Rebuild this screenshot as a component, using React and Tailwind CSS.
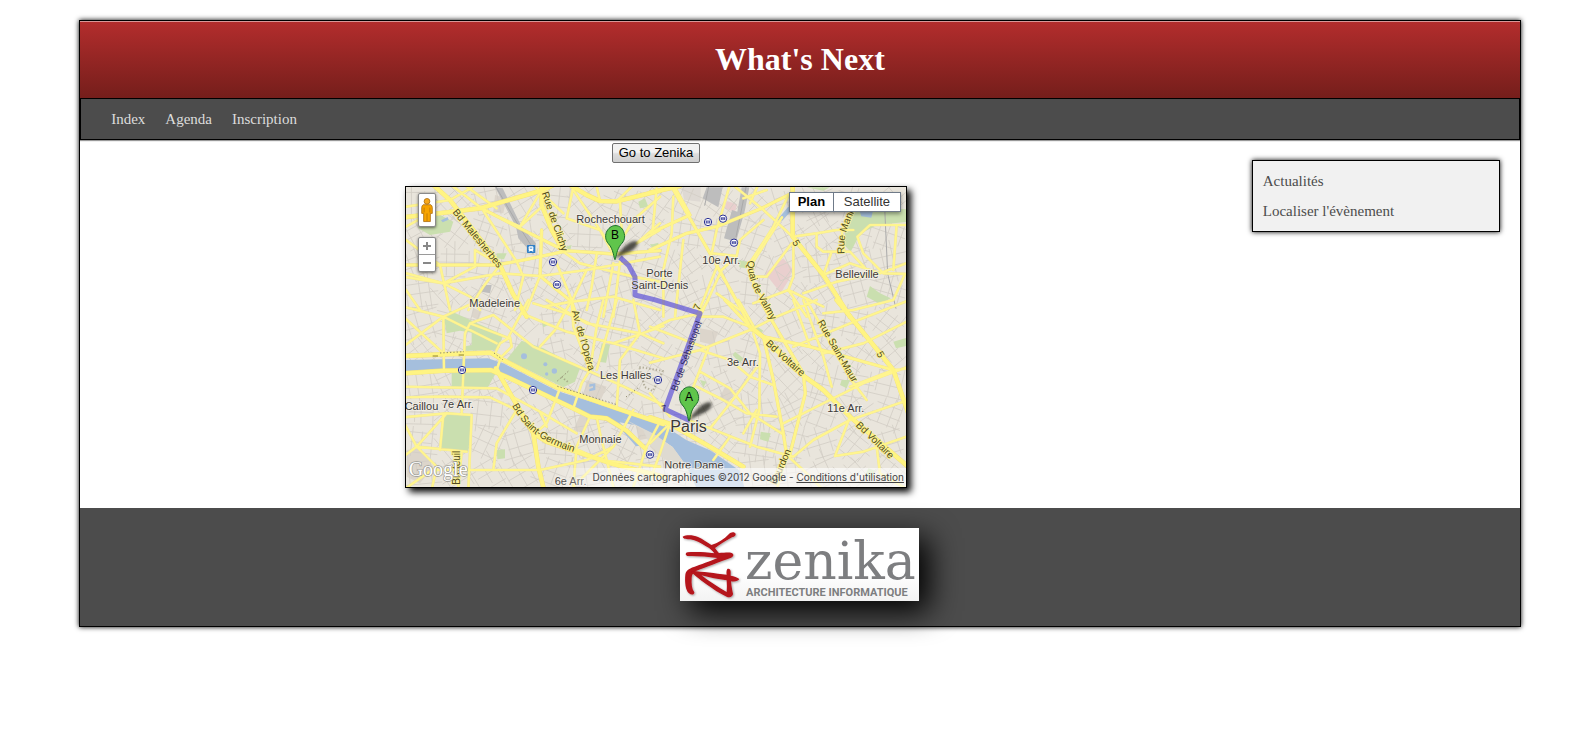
import React from "react";

/* The map is drawn in four sheets on a 1500 x 900 grid. */
const NW = "translate(-18 -171)";
const NE = "translate(732 -171)";
const SW = "translate(-18 339)";
const SE = "translate(732 339)";

const boulevards = [
  [NW, "M10 262L150 246L240 235L430 180L470 160M510 165L560 195L600 213L650 214L780 182M100 165L150 210L300 405L338 490L380 560M425 165L425 225L455 300L490 362"],
  [NE, "M0 188L90 168M428 165L428 320L520 435L600 560"],
  [SW, "M10 168L130 163L272 158L310 180L470 262L650 325L790 372M10 220L130 212L272 210L330 235L520 325L570 350L620 355L680 392L735 445M288 205L330 280L400 400L440 425L520 452L640 492L790 530M400 400L415 500L432 570"],
  [SE, "M0 352L60 372L180 440L280 500M300 80L345 115L450 220L520 270L600 350L780 505M560 0L650 110L730 210L775 340"],
];

const avenues = [
  [NW, "M490 362L560 366L640 372L780 362M10 405L290 405L380 388L490 365M425 300L420 438L515 515L530 560M245 235L350 290L490 360"],
  [NE, "M62 165L180 370L275 540L305 600M0 310L120 255L70 165M0 360L110 310L200 290L335 235L415 195"],
  [SE, "M225 0L300 80M340 110L370 240L400 400L410 465M330 0L385 95L460 220L466 280L420 462M340 110L480 140L730 210"],
];

const streets = [
  [NW, "M160 170L245 235L350 395M200 170L290 235M18 230L150 210L220 170M18 290L90 250L150 246M18 330L120 405L150 540M425 230L360 290L240 235M425 180L360 290M400 165L490 250M520 170L500 265L600 300L640 372M520 180L640 360M780 200L700 270L640 372M780 280L710 340L780 300M225 360L225 410L130 460L18 430M225 360L300 405M130 460L210 500L240 540M300 405L250 470L205 540M10 440L130 460L300 430L420 438L560 420L780 380M350 395L370 440L345 540M420 438L380 540M490 365L540 400L700 440L780 455M640 400L610 560M660 395L640 560M560 420L515 515L430 530M515 515L640 500L780 540M470 400L515 510M18 480L60 540M590 372L575 470L560 540M590 170L600 213M650 214L700 165M660 214L665 300L645 380"],
  [NE, "M20 175L8 300M70 200L65 310L40 420L40 560M255 170L335 235L428 320M238 170L200 300L185 370M322 170L300 220M416 195L370 290L302 395M396 262L310 395M350 180L280 205M428 320L500 310L560 300L610 300M430 340L430 440L415 480L470 560M185 370L260 378L215 420L155 550M300 440L350 440L425 340M340 270L270 330L260 378M500 310L500 350L520 365L600 365L660 430M520 435L545 365M520 435L600 400L690 430L768 400M780 285L660 285L622 320L640 370L700 430L780 432M460 490L560 455L680 430M610 540L730 510L765 432M610 240L575 300L582 360M100 330L75 560M205 400L140 560M302 400L310 460L370 560M200 490L270 540M520 550L610 540M310 520L415 480L520 530M740 285L730 420"],
  [SW, "M10 20L130 50L290 130M10 140L130 50L240 0M130 50L132 212M210 70L195 100L185 340M210 70L280 45L400 140L560 210L650 250L790 315M210 70L320 112M10 50L130 160M325 112L385 0M300 130L330 112L335 140L305 170L285 160L300 130M365 40L450 75L500 95L640 130L790 175M515 0L520 80L570 210L545 250L520 325M465 90L515 0M465 90L420 140M610 0L590 80L570 210M650 0L590 210M720 100L660 180L650 320M640 130L790 78M720 100L700 0M440 0L560 70L720 100M720 100L790 130M300 180L290 210M480 265L440 370L400 405M700 330L640 440L600 480L520 560M780 365L740 440L700 560M10 260L290 265L420 335L530 400M10 292L120 290L270 292L350 330M350 330L290 430L280 510M10 352L140 340L215 345L205 570M10 365L50 440L110 500L95 570M50 440L200 455M50 440L10 470M50 440L140 340M110 510L280 510L420 510L560 480L640 440M130 345L120 450M10 570L110 500M570 350L530 440L520 560M590 350L600 400L640 560M535 450L600 480L780 500M420 335L440 380M185 455L175 560M400 10L500 40L590 80"],
  [SE, "M265 0L310 78M300 90L150 150L0 188M300 90L380 50L500 0M310 100L330 160L328 330L300 440M430 140L620 62L780 0M400 370L560 290L640 250L775 200M460 0L520 170L545 260M470 0L600 235L650 300M412 465L430 470L490 420L600 360L775 300M600 350L555 468M555 468L640 455L775 408M410 465L470 520L520 570M410 465L320 440L180 385L120 362M410 465L380 570M150 50L220 50L300 80M150 40L175 0M150 150L240 180L300 230L370 255M140 260L220 300L290 340L380 350M150 215L240 265L300 340L395 400M180 385L240 310L330 190M0 90L60 60L150 40M0 80L130 130L175 145L130 260L120 362M240 410L190 480M680 440L690 520L775 570M520 160L640 130L780 60M730 210L600 260M430 0L480 140M280 400L320 330M0 280L60 350M0 430L60 370L30 460L0 540M780 205L730 210"],
];

const parks = [
  [NW, "M60 270L120 255L160 275L150 305L90 315L55 295ZM290 370L320 370L312 388L290 385ZM495 350L515 345L510 362ZM715 215L735 205L745 230L720 235ZM750 345L775 338L775 355Z"],
  [NE, "M612 232L780 238L780 275L680 285L630 312L602 365L578 340L590 290ZM265 390L292 395L288 415L268 412ZM650 500L660 468L690 490L722 505L690 522ZM0 342L20 345L10 360ZM470 172L540 172L520 182Z"],
  [SW, "M150 32L310 105L292 150L195 152L190 140L215 135L215 98L180 92L140 100L133 60ZM365 122L430 145L540 205L525 245L490 262L320 178ZM155 218L290 215L262 265L155 262ZM142 335L215 348L205 455L120 448L128 365ZM605 130L630 135L618 188L595 185ZM290 450L315 448L315 475L292 478ZM425 65L445 75L430 82Z"],
  [SE, "M255 155L280 175L270 190L248 165ZM300 65L340 92L325 108L295 82ZM575 240L600 240L590 265L570 255ZM332 395L362 400L355 425L330 418ZM730 125L775 112L768 138L738 145ZM150 240L170 245L160 262ZM655 505L675 512L668 535L645 528Z"],
];

const yards = [
  [NW, "M285 172L308 175L365 290L408 340L400 375L355 325L348 290ZM245 465L275 465L270 490L245 485Z"],
  [NE, "M170 172L218 172L205 232L158 205ZM275 172L298 172L285 240L258 335L222 325L246 240L262 245Z"],
];

const blocks = [
  [NW, "M285 195L320 205L310 250L280 245Z"],
  [SW, "M220 25L245 35L235 60L215 50ZM180 220L212 220L212 255L185 255ZM540 345L570 350L550 400L520 390ZM20 450L60 445L100 500L60 550L20 530ZM125 370L150 365L150 390L125 395ZM700 350L760 370L770 410L720 420ZM560 240L620 260L600 305L550 290ZM290 275L312 280L305 300Z"],
  [SE, "M150 85L205 95L190 135L150 125ZM225 260L260 275L230 310L210 290ZM0 400L40 400L30 470L0 440Z"],
];

const metros = [
  [441, 225], [453, 293], [906, 105], [951, 95], [984, 167],
  [168, 549], [381, 609], [756, 579], [732, 803],
];

/* Fine side streets, one small tilted grid per city block. */
function sideStreets() {
  let seed = 17;
  const rnd = () => {
    seed = (seed * 16807) % 2147483647;
    return seed / 2147483647;
  };
  let d = "";
  for (let y = 0; y < 900; y += 90) {
    for (let x = 0; x < 1500; x += 100) {
      const a = rnd() * 1.5;
      const c = Math.cos(a);
      const s = Math.sin(a);
      for (let k = -1; k < 2; k++) {
        const o = k * 32 + rnd() * 14;
        const l = 30 + rnd() * 35;
        const mx = x + 45;
        const my = y + 45;
        d += `M${mx - c * l - s * o} ${my - s * l + c * o}L${mx + c * l - s * o} ${my + s * l + c * o}`;
        d += `M${mx + s * l + c * o} ${my - c * l + s * o}L${mx - s * l + c * o} ${my + c * l + s * o}`;
      }
    }
  }
  return d;
}
const sideStreetPath = sideStreets();

const places = [
  ["Rochechouart", 511, 108], ["Madeleine", 190, 359], ["Porte", 721, 269], ["Saint-Denis", 676, 305],
  ["10e Arr.", 889, 230], ["Belleville", 1288, 273], ["Les Halles", 582, 575], ["7e Arr.", 108, 663],
  ["Caillou", -4, 668], ["Monnaie", 520, 769], ["3e Arr.", 963, 538], ["11e Arr.", 1264, 676],
  ["Notre Dame", 775, 847], ["6e Arr.", 446, 893],
];

const roadNames = [
  ["Bd Malesherbes", 139, 76, 51], ["Rue de Clichy", 407, 18, 71], ["Av. de l'Opéra", 497, 373, 74],
  ["Bd Voltaire", 1078, 472, 42], ["Rue Saint-Maur", 1234, 406, 60],
  ["Bd Voltaire", 1348, 716, 44], ["Breteuil", 163, 893, -90], ["Bourdon", 1110, 895, -66],
  ["5", 1158, 166, 60], ["5", 1411, 500, 60], ["7", 880, 372, -66],
];

function Layer({ data, ...rest }) {
  return data.map(([t, d], i) => <path key={i} transform={t} d={d} {...rest} />);
}

function Pin({ x, y, letter }) {
  return (
    <g transform={`translate(${x} ${y})`}>
      <path d="M0 0C14 -26 38 -52 60 -54C80 -54 62 -24 30 -16Z" fill="#1d1d12" opacity=".75" filter="url(#soft)" />
      <path d="M0 2C-4 -2 -4 -30 -20 -46C-30 -57 -30 -74 -24 -84C-10 -108 18 -104 26 -82C32 -66 28 -54 18 -44C4 -28 5 -8 0 2Z" fill="#60c54b" stroke="#1b6d2c" strokeWidth="3" />
      <text x="0" y="-59" textAnchor="middle" fontSize="36" fill="#000">{letter}</text>
    </g>
  );
}

function MapDrawing() {
  return (
    <svg viewBox="0 0 1500 900" className="block h-full w-full font-['Liberation_Sans',sans-serif]" role="img" aria-label="Paris">
      <defs>
        <filter id="soft" x="-30%" y="-30%" width="160%" height="160%"><feGaussianBlur stdDeviation="4" /></filter>
        <path id="germain" d="M318 656C360 730 400 762 500 794" />
        <path id="valmy" d="M1024 222C1028 300 1060 330 1120 446" />
        <path id="manin" d="M1316 200C1310 150 1326 110 1362 40" />
      </defs>
      <rect width="1500" height="900" fill="#e9e5dc" />
      <path d="M827 1L884 1L884 44L834 38Z" fill="#ded9d3" />
      <Layer data={blocks} fill="#dcd5cb" />
      <path d="M1077 259L1132 214L1160 246L1148 280L1124 318Z" fill="#e9cfce" />
      <path d="M962 42L994 52L986 76L956 64Z" fill="#e9cfce" />
      <path d={sideStreetPath} stroke="#d3cec5" strokeWidth="2.5" fill="none" />
      <Layer data={parks} fill="#cadfaf" />
      <Layer data={yards} fill="#bdbdbd" />
      <g fill="none" stroke="#a9a9a9" strokeWidth="3">
        <path d="M270 0L340 120L385 190M908 0L896 56M1020 0L990 150M1436 60L1445 260L1470 365" />
      </g>
      <g fill="#a5bfdd">
        <path d="M0 519L246 514L294 530L454 612L632 669L772 714L842 760L912 790L1000 850L1015 900L870 900L842 838L800 780L742 740L690 715L640 706L712 775L690 778L622 701L560 686L500 668L412 624L250 544L120 547L0 552Z" />
        <path d="M1146 60L1166 60L1128 102L1114 98Z" />
        <path d="M1362 75L1400 75L1396 92L1366 88Z" />
        <circle cx="354" cy="508" r="9" /><circle cx="418" cy="532" r="6" /><circle cx="445" cy="552" r="8" /><circle cx="422" cy="561" r="5" />
        <path d="M550 592L568 589L568 609L550 613L550 606L561 602L561 597L550 600Z" />
        <path d="M105 100L125 90L128 98L110 106Z" />
      </g>
      <path d="M650 694L742 740L800 780L842 838L800 842L732 774L712 730Z" fill="#dedad1" />
      <g fill="none" strokeLinejoin="round" strokeLinecap="round">
        <Layer data={streets} stroke="#f1e695" strokeWidth="8" />
        <Layer data={avenues} stroke="#f1e188" strokeWidth="10" />
        <Layer data={boulevards} stroke="#f1df7c" strokeWidth="14" />
        <Layer data={streets} stroke="#fff58f" strokeWidth="6" />
        <Layer data={avenues} stroke="#fff58a" strokeWidth="8" />
        <Layer data={boulevards} stroke="#fff482" strokeWidth="12" />
      </g>
      <g fill="none" stroke="#908b70" strokeWidth="3" strokeDasharray="4 6">
        <path d="M102 498L174 494M264 498L290 518M454 598L630 652M454 582L490 550M660 630L700 600" />
        <path d="M700 540L770 552L740 612L716 600ZM725 560L760 590M466 570L486 585" strokeWidth="6" opacity=".6" />
      </g>
      <path d="M642 211L668 235L687 270L687 324L745 338L882 379L777 667L852 701" fill="none" stroke="#4b3fd6" strokeOpacity=".62" strokeWidth="15" strokeLinejoin="round" />
      <path d="M80 507L96 507M158 504L174 504" stroke="#8d8130" strokeWidth="3" />
      {metros.map(([x, y]) => (
        <g key={`${x}-${y}`} transform={`translate(${x} ${y})`}>
          <circle r="11" fill="#fff" stroke="#2a3193" strokeWidth="3" />
          <path d="M-7 0H7M-5 -4V4M5 -4V4M-5 -3H5M-5 3H5" stroke="#2a3193" strokeWidth="2" />
        </g>
      ))}
      <g transform="translate(375 186)">
        <rect x="-12" y="-12" width="25" height="24" rx="2" fill="#2f7fc6" />
        <rect x="-7" y="-8" width="14" height="14" rx="3" fill="#fff" />
        <path d="M-4 -5H4V0H-4ZM-7 9L-3 5M7 9L3 5" fill="#2f7fc6" stroke="#fff" strokeWidth="2" />
      </g>
      <g fontSize="30" fill="#4f4a22" stroke="#fff48f" strokeWidth="4" paintOrder="stroke">
        {roadNames.map(([n, x, y, r]) => (
          <text key={`${n}${x}`} transform={`translate(${x} ${y}) rotate(${r})`}>{n}</text>
        ))}
        <text><textPath href="#germain">Bd Saint-Germain</textPath></text>
        <text><textPath href="#valmy">Quai de Valmy</textPath></text>
        <text><textPath href="#manin">Rue Manin</textPath></text>
      </g>
      <g fontSize="28" fill="#2c2660">
        <text transform="translate(812 614) rotate(-70)">Bd de Sébastopol</text>
        <text transform="translate(768 676) rotate(-10)">7</text>
      </g>
      <g fontSize="33" fill="#3c3a38" stroke="#f6f3ec" strokeWidth="5" strokeOpacity=".8" paintOrder="stroke">
        {places.map(([n, x, y]) => <text key={n} x={x} y={y}>{n}</text>)}
        <text x="793" y="736" fontSize="48">Paris</text>
      </g>
      <Pin x={627} y={216} letter="B" />
      <Pin x={849} y={700} letter="A" />
      <text x="8" y="866" fontSize="60" className="font-['Liberation_Serif',serif]" fill="#fff" stroke="#9b9b95" strokeWidth="4" paintOrder="stroke">Google</text>
    </svg>
  );
}

function EventMap() {
  return (
    <div className="relative h-[302px] w-[502px] border border-black font-['Liberation_Sans',sans-serif] shadow-[4px_4px_7px_#000]">
      <div className="h-full w-full overflow-hidden"><MapDrawing /></div>
      <div className="absolute top-1.5 left-3 flex flex-col gap-2.5">
        <button aria-label="Street View" className="flex h-[34px] w-[18px] items-center justify-center rounded-xs border border-[#8a8a8a] bg-white shadow-[0_1px_3px_#0008]">
          <svg viewBox="0 0 12 26" className="h-[25px] w-3 shrink-0" aria-hidden="true">
            <circle cx="6" cy="3.5" r="3" fill="#f7a81b" stroke="#a8690a" strokeWidth=".8" />
            <path d="M2 7H10Q11.500 8 11.500 10V16H9.500V24.500H2.500V16H.5V10Q.5 8 2 7Z" fill="#f7a400" stroke="#a8690a" strokeWidth=".8" />
            <path d="M6 16V24M3 10V15M9 10V15" stroke="#b5700a" strokeWidth=".8" />
          </svg>
        </button>
        <div className="flex w-[18px] flex-col divide-y divide-[#9a9a9a] rounded-xs border border-[#8a8a8a] bg-white shadow-[0_1px_3px_#0008]">
          <button aria-label="Zoom avant" className="flex h-[17px] items-center justify-center">
            <svg viewBox="0 0 8 8" className="size-2" aria-hidden="true"><path d="M0 4H8M4 0V8" stroke="#888" strokeWidth="2" /></svg>
          </button>
          <button aria-label="Zoom arrière" className="flex h-4 items-center justify-center">
            <svg viewBox="0 0 8 8" className="size-2" aria-hidden="true"><path d="M0 4H8" stroke="#888" strokeWidth="2" /></svg>
          </button>
        </div>
      </div>
      <div className="absolute top-[5px] right-[5px] flex h-5 divide-x divide-[#6f7a88] border border-[#6f7a88] bg-white text-[13px] leading-[18px] shadow-[0_2px_4px_#0006]">
        <button className="w-11 font-bold text-black">Plan</button>
        <button className="w-[66px] text-[#333]">Satellite</button>
      </div>
      <p className="absolute right-0 bottom-0 bg-linear-to-r from-white/0 via-white/60 via-15% to-white/60 pr-0.5 pl-10 font-[Inter,sans-serif] text-[10px] leading-[19px] whitespace-nowrap text-[#444]">
        Données cartographiques ©2012 Google - <a href="#conditions" className="underline">Conditions d'utilisation</a>
      </p>
    </div>
  );
}

function ZenikaLogo() {
  return (
    <svg viewBox="0 0 239 73" className="h-[73px] w-[239px] bg-linear-to-b from-white from-60% to-[#f3f3f3] shadow-[10px_10px_30px_#000]" role="img" aria-label="Zenika Architecture Informatique">
      <defs>
        <filter id="mark" x="-10%" y="-10%" width="125%" height="125%">
          <feDropShadow dx="3" dy="3" stdDeviation="3" floodColor="#000" floodOpacity=".35" />
        </filter>
      </defs>
      <g transform="scale(.33333) translate(-34 -54)" fill="#b5121b" filter="url(#mark)">
        <path d="M42 80C52 74 72 74 88 81C103 87 116 98 128 105C148 99 166 88 181 72C186 66 196 64 200 70C203 77 198 80 190 82C170 92 152 105 139 114C144 121 148 126 151 129C165 128 178 127 187 128C197 131 196 139 187 143C158 154 108 172 82 183C73 188 69 194 69 204C68 222 69 236 77 247C77 255 68 256 61 250C50 240 48 215 50 194C52 180 66 174 82 169C108 159 132 150 147 144C116 139 78 137 56 138C49 136 50 128 57 127C82 125 112 127 137 130C131 121 124 115 112 109C95 99 82 90 65 88C55 86 45 89 42 80Z" />
        <path d="M72 183C100 185 139 190 174 194C173 188 173 182 176 177C181 175 186 178 186 185L186 197C196 199 206 202 212 207C209 213 199 216 187 214C188 229 191 243 193 252C192 260 183 264 174 260C154 251 131 235 111 221C93 208 76 194 67 185ZM98 196C121 213 149 233 174 246C175 234 175 222 174 211C149 208 123 202 98 196Z" fillRule="evenodd" />
      </g>
      <text x="65" y="51" fontSize="52" fill="#7d7e80" className="font-['DejaVu_Serif',serif]">zenika</text>
      <text x="66" y="68" fontSize="11" fill="#7d7e80" className="font-[Roboto,sans-serif] font-bold">ARCHITECTURE INFORMATIQUE</text>
    </svg>
  );
}

export default function App() {
  return (
    <div className="flow-root font-['Liberation_Serif',serif] text-[15px] leading-5">
      <div className="mt-5 mb-10 ml-[5%] box-content w-[calc(91%-1px)] border border-black bg-white shadow-[0_0_5px_#000]">
        <header className="bg-linear-to-b from-[#b42d2d] to-[#751e1b] py-5 text-center shadow-[inset_0_1px_0_#ffffff80]">
          <h1 className="text-[32px] leading-[37px] font-bold text-white">What's Next</h1>
        </header>
        <nav className="flex gap-5 border border-black bg-[#4c4c4c] px-[30px] py-2.5 text-[#dcdcdc] shadow-[0_1px_1px_#0006]">
          <a href="#index">Index</a>
          <a href="#agenda">Agenda</a>
          <a href="#inscription">Inscription</a>
        </nav>
        <div className="flex items-start">
          <main className="flex w-4/5 flex-col items-center pt-[3px] pb-5">
            <button className="mb-[23px] h-5 w-[88px] rounded-xs border border-[#707070] bg-linear-to-b from-[#f2f2f2] from-45% via-[#dddddd] via-55% to-[#cfcfcf] font-['Liberation_Sans',sans-serif] text-[13px] leading-[18px] whitespace-nowrap text-black">Go to Zenika</button>
            <EventMap />
          </main>
          <aside className="m-5 flex flex-1 flex-col gap-2.5 border border-black bg-[#f1f1f1] p-2.5 text-[#4c4c4c] shadow-[0_0_5px_#000]">
            <a href="#actualites">Actualités</a>
            <a href="#localiser">Localiser l'évènement</a>
          </aside>
        </div>
        <footer className="flex justify-center bg-[#4c4c4c] pt-5 pb-[25px]">
          <ZenikaLogo />
        </footer>
      </div>
    </div>
  );
}
